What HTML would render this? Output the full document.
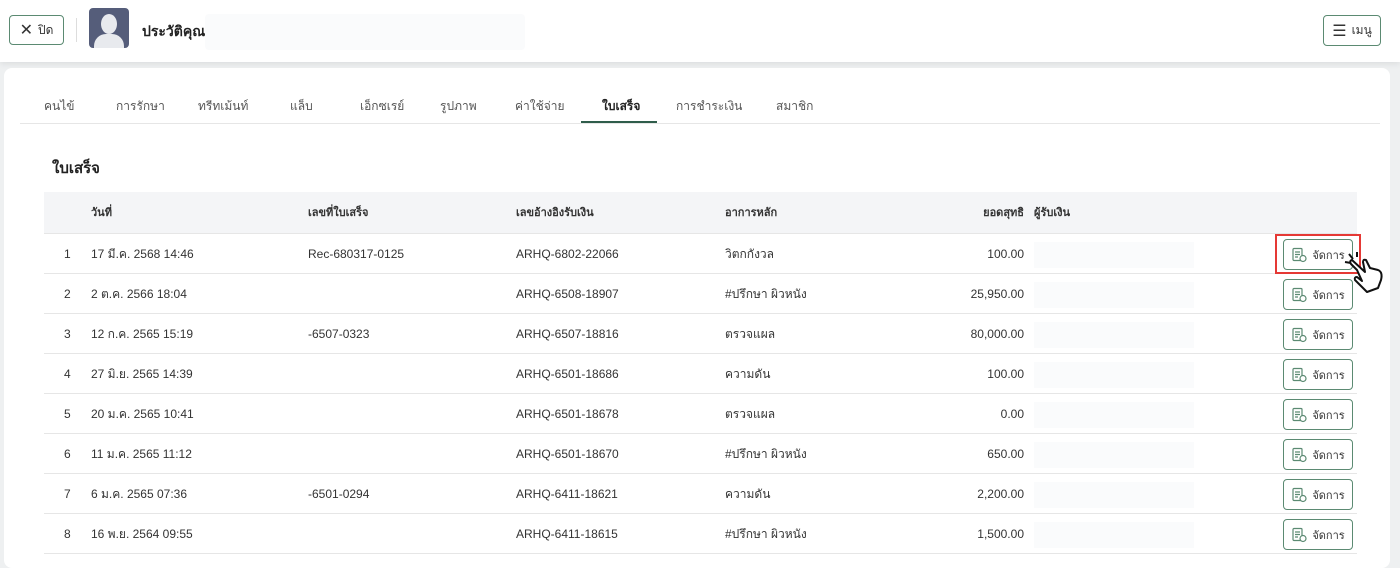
<!DOCTYPE html>
<html><head><meta charset="utf-8"><style>
*{box-sizing:border-box;margin:0;padding:0}
body{width:1400px;height:553px;overflow:hidden;background:#eef0f1;font-family:"Liberation Sans","Noto Sans CJK SC",sans-serif;color:#333;position:relative;font-size:12px}
.top{position:absolute;left:0;top:0;width:1400px;height:62px;background:#fff;box-shadow:0 2px 6px rgba(0,0,0,.08)}
.btn{position:absolute;border:1px solid #5b8a72;border-radius:4px;background:#fff;color:#333;font-size:12px;display:flex;align-items:center;justify-content:center;gap:5px}
.card{position:absolute;left:4px;top:68px;width:1386px;height:500px;background:#fff;border-radius:8px}
.tab{position:absolute;top:97px;font-size:12px;color:#555}
.a{position:absolute;white-space:nowrap;height:16px;line-height:16px;display:flex;align-items:center}
.row{position:absolute;left:44px;width:1313px;height:40px;border-bottom:1px solid #e6e6e6}
</style></head><body>
<div class="top">
<div class="btn" style="left:9px;top:15px;width:55px;height:30px"><span style="font-size:16px">✕</span>ปิด</div>
<div style="position:absolute;left:76px;top:18px;width:1px;height:24px;background:#ddd"></div>
<div style="position:absolute;left:89px;top:8px;width:40px;height:40px;background:#555d7a;border-radius:4px;overflow:hidden">
<div style="position:absolute;left:12px;top:6px;width:16px;height:20px;border-radius:50%;background:#e8eaee"></div>
<div style="position:absolute;left:5px;top:26px;width:30px;height:20px;border-radius:12px 12px 0 0;background:#e8eaee"></div></div>
<div class="a" style="left:142px;top:23px;font-size:14px;font-weight:bold;color:#222">ประวัติคุณ</div>
<div style="position:absolute;left:205px;top:14px;width:320px;height:36px;background:#fafbfc;border-radius:4px"></div>
<div class="btn" style="left:1323px;top:15px;width:58px;height:31px"><span style="font-size:16px">☰</span>เมนู</div>
</div>
<div class="card"></div>
<div class="tab" style="left:44px">คนไข้</div>
<div class="tab" style="left:116px">การรักษา</div>
<div class="tab" style="left:198px">ทรีทเม้นท์</div>
<div class="tab" style="left:290px">แล็บ</div>
<div class="tab" style="left:360px">เอ็กซเรย์</div>
<div class="tab" style="left:440px">รูปภาพ</div>
<div class="tab" style="left:515px">ค่าใช้จ่าย</div>
<div class="tab" style="left:602px;color:#222;font-weight:bold">ใบเสร็จ</div>
<div class="tab" style="left:676px">การชำระเงิน</div>
<div class="tab" style="left:776px">สมาชิก</div>
<div style="position:absolute;left:20px;top:123px;width:1360px;height:1px;background:#e6e6e6"></div>
<div style="position:absolute;left:581px;top:121px;width:76px;height:2px;background:#2f5d4b"></div>
<div class="a" style="left:52px;top:161px;font-size:15px;font-weight:bold;color:#222">ใบเสร็จ</div>
<div style="position:absolute;left:44px;top:192px;width:1313px;height:42px;background:#f4f5f7;border-bottom:1px solid #e6e6e6"></div>
<div class="a" style="left:91px;top:205px;font-weight:bold;font-size:11px">วันที่</div>
<div class="a" style="left:308px;top:205px;font-weight:bold;font-size:11px">เลขที่ใบเสร็จ</div>
<div class="a" style="left:516px;top:205px;font-weight:bold;font-size:11px">เลขอ้างอิงรับเงิน</div>
<div class="a" style="left:725px;top:205px;font-weight:bold;font-size:11px">อาการหลัก</div>
<div class="a" style="right:376px;top:205px;font-weight:bold;font-size:11px">ยอดสุทธิ</div>
<div class="a" style="left:1034px;top:205px;font-weight:bold;font-size:11px">ผู้รับเงิน</div>
<div id="rows"></div>
<script>
var d=[["17 มี.ค. 2568 14:46","Rec-680317-0125","ARHQ-6802-22066","วิตกกังวล","100.00"],
["2 ต.ค. 2566 18:04","","ARHQ-6508-18907","#ปรึกษา ผิวหนัง","25,950.00"],
["12 ก.ค. 2565 15:19","-6507-0323","ARHQ-6507-18816","ตรวจแผล","80,000.00"],
["27 มิ.ย. 2565 14:39","","ARHQ-6501-18686","ความดัน","100.00"],
["20 ม.ค. 2565 10:41","","ARHQ-6501-18678","ตรวจแผล","0.00"],
["11 ม.ค. 2565 11:12","","ARHQ-6501-18670","#ปรึกษา ผิวหนัง","650.00"],
["6 ม.ค. 2565 07:36","-6501-0294","ARHQ-6411-18621","ความดัน","2,200.00"],
["16 พ.ย. 2564 09:55","","ARHQ-6411-18615","#ปรึกษา ผิวหนัง","1,500.00"]];
var h="",ic='<svg width="16" height="16" viewBox="0 0 16 16" fill="none" stroke="#5b8a72" stroke-width="1.2"><rect x="2" y="1.5" width="9" height="12" rx="1"/><path d="M4 5h5M4 7.5h5M4 10h3"/><circle cx="12" cy="11.5" r="3" fill="#fff"/></svg>';
d.forEach(function(r,i){var y=234+i*40,t=y+12;
h+='<div class="row" style="top:'+y+'px"></div>';
h+='<div class="a" style="left:64px;top:'+t+'px">'+(i+1)+'</div>';
h+='<div class="a" style="left:91px;top:'+t+'px">'+r[0]+'</div>';
h+='<div class="a" style="left:308px;top:'+t+'px">'+r[1]+'</div>';
h+='<div class="a" style="left:516px;top:'+t+'px">'+r[2]+'</div>';
h+='<div class="a" style="left:725px;top:'+t+'px">'+r[3]+'</div>';
h+='<div class="a" style="right:376px;top:'+t+'px">'+r[4]+'</div>';
h+='<div style="position:absolute;left:1034px;top:'+(y+8)+'px;width:160px;height:26px;background:#fafbfc"></div>';
h+='<div class="btn" style="left:1283px;top:'+(y+5)+'px;width:70px;height:31px;font-size:11px">'+ic+'จัดการ</div>';});
h+='<div style="position:absolute;left:1275px;top:234px;width:86px;height:40px;border:2px solid #e53935"></div>';
h+='<svg style="position:absolute;left:1343px;top:250px" width="42" height="44" viewBox="0 0 42 44" fill="#fff" stroke="#111" stroke-width="2" stroke-linejoin="round"><path d="M14 20 L8 14 Q6 11 9 10 L22 22 L20 12 Q20 9 23 10 L27 18 L35 20 Q40 22 38 30 L35 38 L24 42 L12 30 Q11 27 14 27 L19 31 Z"/><path d="M6 4 L10 9 M2 12 L8 13 M14 2 L14 7" fill="none"/></svg>';
document.getElementById("rows").innerHTML=h;
</script>
</body></html>
